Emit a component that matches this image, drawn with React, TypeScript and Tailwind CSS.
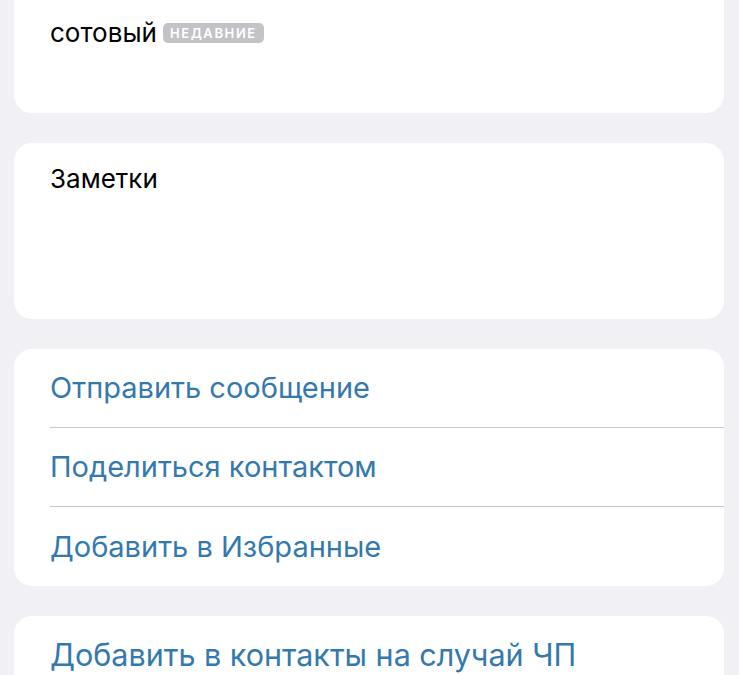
export default function App() {
  const actions = ['Отправить сообщение', 'Поделиться контактом', 'Добавить в Избранные'];

  return (
    <div
      className="h-[675px] w-[739px] overflow-hidden bg-[#f0f0f5] px-[14px] pr-[15px] text-black"
      style={{ fontFamily: 'Inter, "Noto Sans", sans-serif' }}
    >
      <div className="-mt-[20px] flex flex-col gap-[30px]">
        {/* phone */}
        <div className="h-[133px] rounded-[18px] bg-white pl-[36px] pt-[38px]">
          <div className="flex items-center gap-[6px]">
            <span className="text-[26px] leading-[30px]">сотовый</span>
            <span className="rounded-[5px] bg-[#c2c2c7] px-[7px] text-[13px] font-semibold leading-[20px] tracking-[1.6px] text-white">
              НЕДАВНИЕ
            </span>
          </div>
        </div>

        {/* notes */}
        <div className="h-[176px] rounded-[18px] bg-white pl-[36px] pt-[21px]">
          <span className="text-[26px] leading-[30px]">Заметки</span>
        </div>

        {/* actions */}
        <div className="rounded-[18px] bg-white pl-[36px]">
          {actions.map((label, i) => (
            <div
              key={label}
              className={`flex h-[79px] items-center text-[29px] text-[#3479ad] ${
                i < actions.length - 1 ? 'border-b border-[#c8c8cc]' : ''
              }`}
            >
              {label}
            </div>
          ))}
        </div>

        <div className="rounded-[18px] bg-white pl-[36px]">
          <div className="flex h-[78px] items-center text-[30.5px] text-[#3479ad]">
            Добавить в контакты на случай ЧП
          </div>
        </div>
      </div>
    </div>
  );
}
